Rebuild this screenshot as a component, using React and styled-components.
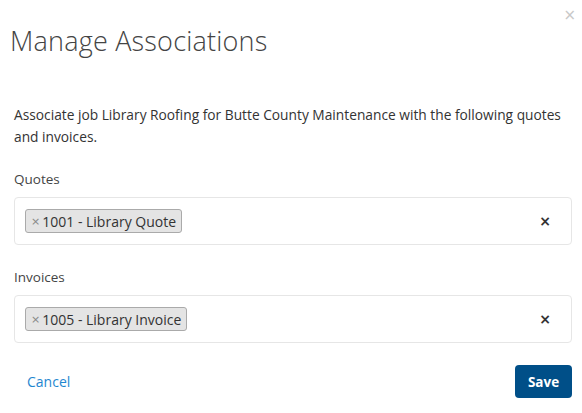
import React from "react";
import styled, { createGlobalStyle } from "styled-components";

const GlobalStyle = createGlobalStyle`
  html, body {
    margin: 0;
    background: #fff;
  }
  body {
    font-family: "Open Sans", "Liberation Sans", sans-serif;
    color: #333;
  }
`;

const Modal = styled.div`
  position: relative;
  width: 582px;
  height: 413px;
  box-sizing: border-box;
  padding: 0 10px 0 14px;
  display: flex;
  flex-direction: column;
`;

const CloseButton = styled.button`
  position: absolute;
  top: 8px;
  right: 6px;
  border: 0;
  background: none;
  padding: 0;
  color: #c8c8c8;
  font-size: 15px;
  line-height: 15px;
  font-family: "DejaVu Sans", sans-serif;
  cursor: pointer;
`;

const Title = styled.h2`
  margin: 23px 0 0 -4px;
  font-family: "Open Sans", sans-serif;
  font-weight: 300;
  font-size: 27px;
  line-height: 36px;
  color: #444;
  letter-spacing: 0.2px;
`;

const Intro = styled.p`
  margin: 45px 0 0;
  font-size: 13.75px;
  line-height: 22px;
  color: #333;
  padding-right: 6px;
`;

const Field = styled.div`
  margin-top: ${(p) => p.$top}px;
`;

const Label = styled.div`
  font-size: 13.5px;
  line-height: 18px;
  color: #444;
  margin-bottom: 9px;
`;

const Select = styled.div`
  height: 48px;
  box-sizing: border-box;
  border: 1px solid #e6e6e6;
  border-radius: 4px;
  display: flex;
  align-items: center;
  padding: 0 20px 0 10px;
`;

const Tag = styled.span`
  display: inline-flex;
  align-items: center;
  height: 24px;
  box-sizing: border-box;
  background: #e4e4e4;
  border: 1px solid #aaa;
  border-radius: 3px;
  padding: 0 5px 0 5px;
  font-size: 14px;
  color: #333;
`;

const TagRemove = styled.span`
  color: #888;
  font-size: 11px;
  margin-right: 2px;
  font-family: "DejaVu Sans", sans-serif;
`;

const ClearAll = styled.span`
  margin-left: auto;
  font-size: 14px;
  font-weight: bold;
  color: #333;
  font-family: "DejaVu Sans", sans-serif;
`;

const Footer = styled.div`
  margin-top: 22px;
  display: flex;
  align-items: center;
  justify-content: space-between;
  padding-left: 13px;
`;

const CancelLink = styled.a`
  color: #1f87d0;
  font-size: 14px;
  text-decoration: none;
`;

const SaveButton = styled.button`
  width: 57px;
  height: 33px;
  border: 0;
  border-radius: 4px;
  background: #004f88;
  color: #fff;
  font-family: "Open Sans", sans-serif;
  font-weight: 700;
  font-size: 13.5px;
`;

const AssociationField = ({ label, tag, top }) => (
  <Field $top={top}>
    <Label>{label}</Label>
    <Select>
      <Tag>
        <TagRemove>×</TagRemove>
        {tag}
      </Tag>
      <ClearAll>×</ClearAll>
    </Select>
  </Field>
);

export default function App() {
  return (
    <>
      <GlobalStyle />
      <Modal>
        <CloseButton>×</CloseButton>
        <Title>Manage Associations</Title>
        <Intro>
          Associate job Library Roofing for Butte County Maintenance with the
          following quotes and invoices.
        </Intro>
        <AssociationField label="Quotes" tag="1001 - Library Quote" top={22} />
        <AssociationField label="Invoices" tag="1005 - Library Invoice" top={23} />
        <Footer>
          <CancelLink href="#">Cancel</CancelLink>
          <SaveButton>Save</SaveButton>
        </Footer>
      </Modal>
    </>
  );
}
